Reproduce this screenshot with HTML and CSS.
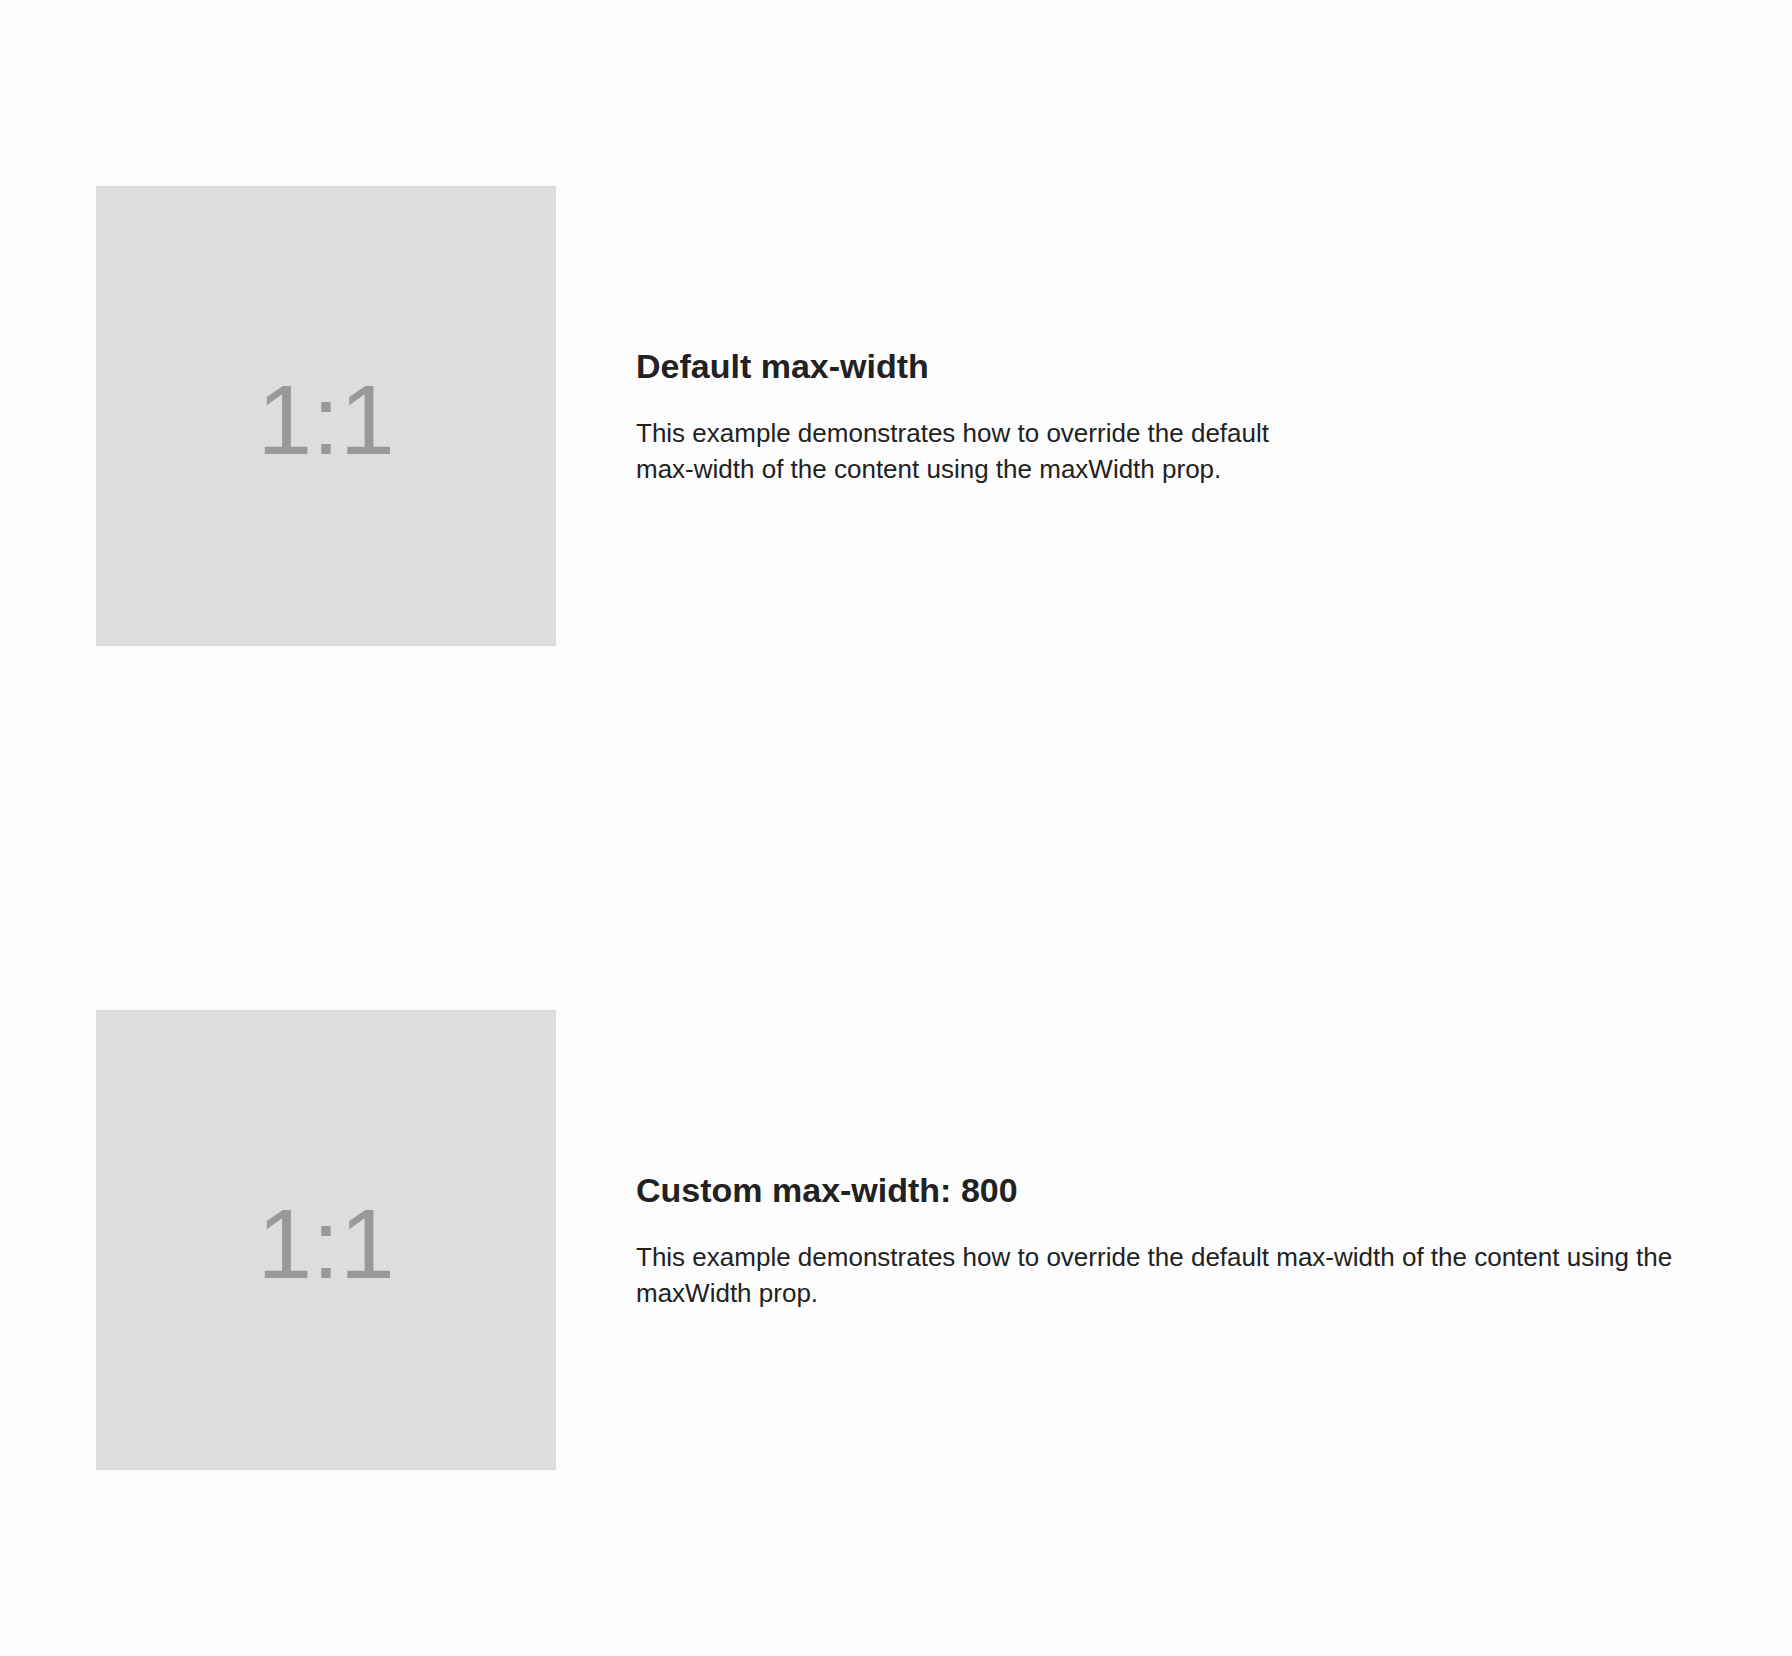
FILE: index.html
```html
<!DOCTYPE html>
<html lang="en">
<head>
<meta charset="utf-8">
<title>Max width examples</title>
<link rel="stylesheet" href="styles.css">
</head>
<body>
<main class="page">
  <section class="feature">
    <div class="media"><span class="ratio">1:1</span></div>
    <div class="content content-default">
      <h2 class="title">Default max-width</h2>
      <p class="desc">This example demonstrates how to override the default max-width of the content using the maxWidth prop.</p>
    </div>
  </section>
  <section class="feature">
    <div class="media"><span class="ratio">1:1</span></div>
    <div class="content content-custom">
      <h2 class="title">Custom max-width: 800</h2>
      <p class="desc">This example demonstrates how to override the default max-width of the content using the maxWidth prop.</p>
    </div>
  </section>
</main>
</body>
</html>
```
FILE: styles.css
```css
html, body {
  margin: 0;
  padding: 0;
  background: #fdfdfd;
}
body {
  font-family: "Liberation Sans", Arial, sans-serif;
  color: #222;
}
.page {
  padding: 4px 96px;
  display: flex;
  flex-direction: column;
}
.feature {
  display: flex;
  align-items: center;
  gap: 80px;
  padding: 182px 0;
}
.media {
  flex: 0 0 460px;
  height: 460px;
  background: #dddddd;
  display: flex;
  align-items: center;
  justify-content: center;
}
.ratio {
  font-size: 99px;
  color: #999999;
  line-height: 1;
  padding-top: 6px;
}
.content {
  flex: 1 1 auto;
  padding-top: 1px;
}
.content-default {
  max-width: 640px;
}
.title {
  margin: 0 0 28px;
  font-size: 34px;
  line-height: 1.2;
  font-weight: 700;
  color: #222;
}
.desc {
  margin: 0;
  font-size: 26px;
  line-height: 1.4;
  color: #222;
}
```
